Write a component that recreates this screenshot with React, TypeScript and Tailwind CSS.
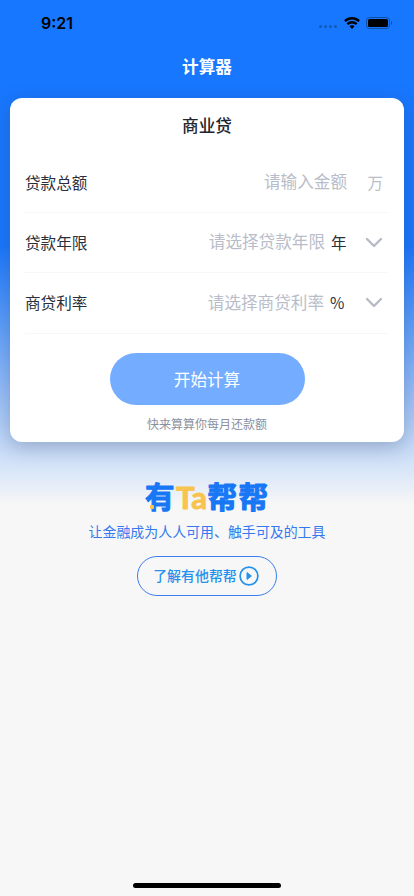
import type { ReactNode } from "react";

function StatusBar() {
  return (
    <div className="flex h-[45px] items-center justify-between pr-[21px] pl-[41px] text-black">
      <span className="font-['Inter'] text-[16px] font-semibold">9:21</span>
      <div className="flex items-center">
        <div className="mt-[8px] mr-[7px] flex gap-[2px]">
          {[0, 1, 2, 3].map((i) => (
            <span key={i} className="size-[3px] rounded-full bg-[#1358b8]" />
          ))}
        </div>
        <svg width="16" height="12" viewBox="0 0 16 12" fill="none" stroke="currentColor" strokeWidth="2.4">
          <path d="M.9 4.2a10.2 10.2 0 0 1 14.2 0" />
          <path d="M3.4 7.1a6.6 6.6 0 0 1 9.2 0" />
          <path d="M8 11.9 5.5 9.3a3.4 3.4 0 0 1 5 0Z" fill="currentColor" stroke="none" />
        </svg>
        <svg className="ml-[6px]" width="27" height="12" viewBox="0 0 27 12">
          <rect x=".5" y=".5" width="23" height="11" rx="3" fill="none" stroke="#104fa6" />
          <rect x="2" y="2" width="20" height="8" rx="1.6" />
          <path d="M25 4v4c1.6-.7 1.6-3.3 0-4Z" fill="#104fa6" />
        </svg>
      </div>
    </div>
  );
}

function Chevron() {
  return (
    <svg
      className="mr-[6px] ml-auto"
      width="18"
      height="11"
      viewBox="0 0 18 11"
      fill="none"
      stroke="#b6bbc7"
      strokeWidth="2.4"
      strokeLinecap="round"
      strokeLinejoin="round"
    >
      <path d="m2 2 7 7 7-7" />
    </svg>
  );
}

function Row({
  label,
  placeholder,
  inset,
  children,
}: {
  label: string;
  placeholder: string;
  inset: string;
  children: ReactNode;
}) {
  return (
    <div className="flex h-[60.2px] items-center border-b border-[#f7f7f9]">
      <span className="text-[15.6px] text-[#2b2f3a]">{label}</span>
      <span className={`ml-auto pb-[2px] text-[16.6px] text-[#b9bdc9] ${inset}`}>{placeholder}</span>
      <div className="flex w-[58px] items-center text-[15.6px] text-[#2b2f3a]">{children}</div>
    </div>
  );
}

function Logo() {
  return (
    <svg
      width="130"
      height="50"
      viewBox="-3 -10 130 50"
      fontWeight="700"
      strokeLinejoin="round"
      role="img"
      aria-label="有Ta帮帮"
    >
      <g fill="#1777f5" stroke="#1777f5" strokeWidth="1" fontSize="29.5">
        <text x="0" y="27.5">有</text>
        <text x="62.5" y="27.5">帮</text>
        <text x="93.5" y="27.5">帮</text>
      </g>
      <text
        x="31"
        y="28.5"
        fontSize="31"
        fontFamily="Lato"
        fill="#f8c34f"
        stroke="#f8c34f"
        strokeWidth=".9"
        textLength="31"
        lengthAdjust="spacingAndGlyphs"
      >
        Ta
      </text>
      <rect x="5" y="25" width="4" height="4" rx="1" fill="#f8c34f" />
    </svg>
  );
}

export default function App() {
  return (
    <div className="flex h-[896px] w-[414px] flex-col overflow-hidden bg-[#f7f7f7] bg-[linear-gradient(180deg,#1777ff_0,#1777ff_245px,#f7f7f7_505px)] font-['Noto_Sans_CJK_SC',sans-serif]">
      <StatusBar />
      <header className="flex h-[53px] items-center justify-center pb-[11px] text-[16.6px] font-bold text-white">
        计算器
      </header>

      <main className="mx-[10px] h-[344px] rounded-[12px] bg-white px-[15px] shadow-[0_5px_20px_rgba(60,70,100,0.33)]">
        <h1 className="flex h-[55px] items-center justify-center text-[16.6px] font-medium text-[#20242e]">
          商业贷
        </h1>
        <Row label="贷款总额" placeholder="请输入金额" inset="mr-[-16px]">
          <span className="mr-[6px] ml-auto text-[#b9bdc9]">万</span>
        </Row>
        <Row label="贷款年限" placeholder="请选择贷款年限" inset="mr-[6px]">
          <span>年</span>
          <Chevron />
        </Row>
        <Row label="商贷利率" placeholder="请选择商贷利率" inset="mr-[7px]">
          <span className="-ml-px">%</span>
          <Chevron />
        </Row>
        <button className="mx-auto mt-[19.4px] flex h-[52px] w-[195px] items-center justify-center rounded-full bg-[#74adff] text-[16.6px] text-white">
          开始计算
        </button>
        <p className="mt-[10px] text-center text-[12px] leading-[18px] text-[#8b90a0]">快来算算你每月还款额</p>
      </main>

      <footer className="flex flex-col items-center pt-[28px]">
        <Logo />
        <p className="mt-px text-[13.95px] leading-[20px] text-[#3579f0]">让金融成为人人可用、触手可及的工具</p>
        <button className="mt-[15px] flex h-[40px] w-[140px] items-center justify-center gap-[2px] rounded-full border border-[#3d7eee] pr-[2px] pb-px text-[13.95px] font-medium text-[#2492ec]">
          了解有他帮帮
          <svg className="mt-px" width="20" height="20" viewBox="0 0 20 20" fill="none">
            <circle cx="10" cy="10" r="8.9" stroke="#2492ec" strokeWidth="1.7" />
            <path d="M8 6.6v6.8l4.4-3.4Z" fill="#2492ec" stroke="#2492ec" strokeLinejoin="round" />
          </svg>
        </button>
      </footer>

      <div className="mx-auto mt-auto mb-[8px] h-[5px] w-[148px] rounded-full bg-black" />
    </div>
  );
}
